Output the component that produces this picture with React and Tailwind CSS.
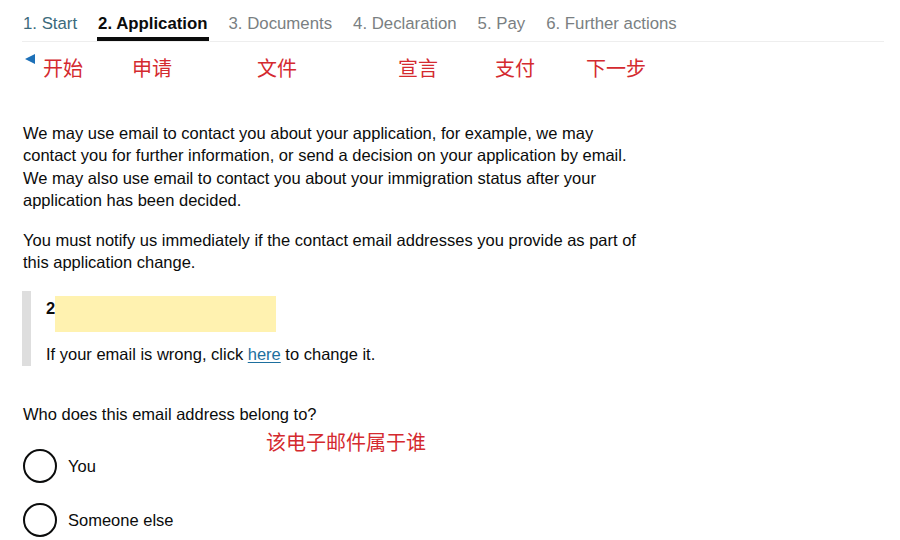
const tabs = [
  { label: '1. Start', state: 'done' },
  { label: '2. Application', state: 'active' },
  { label: '3. Documents', state: 'todo' },
  { label: '4. Declaration', state: 'todo' },
  { label: '5. Pay', state: 'todo' },
  { label: '6. Further actions', state: 'todo' },
]

const tabColor = {
  done: 'text-[#3b6a7c]',
  active: 'text-[#0b0c0c] font-bold',
  todo: 'text-[#7a7f82]',
}

function Radio({ label }) {
  return (
    <label className="flex items-center h-[34px]">
      <span className="w-[34px] h-[34px] rounded-full border-2 border-[#0b0c0c] bg-white" />
      <span className="ml-[11px] leading-6">{label}</span>
    </label>
  )
}

export default function App() {
  return (
    <div
      className="bg-white min-h-[540px] w-[900px] text-[16.5px] text-[#0b0c0c]"
      style={{ fontFamily: '"Liberation Sans", "Noto Sans CJK SC", sans-serif' }}
    >
      <div className="pl-[22px] pr-[16px]">
        {/* step tabs */}
        <nav className="flex gap-[19px] pt-[12px] border-b border-[#eeeeee]">
          {tabs.map((t) => (
            <div key={t.label} className="flex flex-col">
              <span className={`leading-6 px-[1px] text-[16.8px] ${tabColor[t.state]}`}>{t.label}</span>
              <span className={`mt-[1px] h-[4px] ${t.state === 'active' ? 'bg-[#0b0c0c]' : 'bg-transparent'}`} />
            </div>
          ))}
        </nav>

        {/* translated step names */}
        <div className="flex items-start mt-[13px] pl-[3px] text-[20px] leading-[20px] text-[#d42a2f]">
          <span className="-mt-[1px] w-0 h-0 border-y-[5px] border-y-transparent border-r-[10px] border-r-[#1d70b8]" />
          <span className="ml-[8px] mt-[4px]">开始</span>
          <span className="ml-[49px] mt-[4px]">申请</span>
          <span className="ml-[85px] mt-[4px]">文件</span>
          <span className="ml-[101px] mt-[4px]">宣言</span>
          <span className="ml-[57px] mt-[4px]">支付</span>
          <span className="ml-[51px] mt-[4px]">下一步</span>
        </div>

        <div className="pl-[1px] mt-[43px] leading-[22.4px]">
          <p className="whitespace-nowrap">
            We may use email to contact you about your application, for example, we may
            <br />
            contact you for further information, or send a decision on your application by email.
            <br />
            We may also use email to contact you about your immigration status after your
            <br />
            application has been decided.
          </p>
          <p className="mt-[17px] whitespace-nowrap">
            You must notify us immediately if the contact email addresses you provide as part of
            <br />
            this application change.
          </p>
        </div>

        {/* inset with the current address */}
        <div className="mt-[18px] border-l-[9px] border-[#dedede] pl-[15px] pt-[5px]">
          <div className="flex items-start">
            <span className="font-bold leading-6">2</span>
            <span className="w-[221px] h-[36px] bg-[#fff2b0]" />
          </div>
          <p className="mt-[10px] leading-6">
            If your email is wrong, click{' '}
            <a href="#" className="text-[#1d6f9e] underline underline-offset-2">here</a>{' '}
            to change it.
          </p>
        </div>

        <div className="pl-[1px] mt-[36px]">
          <div className="leading-6">Who does this email address belong to?</div>
          <div className="mt-[7px] ml-[243px] text-[20px] leading-[20px] text-[#d42a2f]">该电子邮件属于谁</div>
          <div className="-mt-[4px] flex flex-col gap-[20px]">
            <Radio label="You" />
            <Radio label="Someone else" />
          </div>
        </div>
      </div>
    </div>
  )
}
